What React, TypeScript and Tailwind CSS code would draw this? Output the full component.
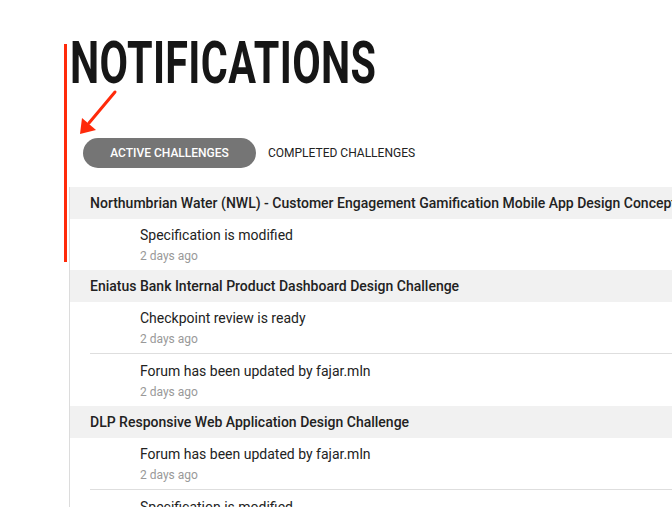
import React from "react";

type Notice = {
  text: string;
  time: string;
};

type Group = {
  title: string;
  items: Notice[];
};

const groups: Group[] = [
  {
    title:
      "Northumbrian Water (NWL) - Customer Engagement Gamification Mobile App Design Concept",
    items: [{ text: "Specification is modified", time: "2 days ago" }],
  },
  {
    title: "Eniatus Bank Internal Product Dashboard Design Challenge",
    items: [
      { text: "Checkpoint review is ready", time: "2 days ago" },
      { text: "Forum has been updated by fajar.mln", time: "2 days ago" },
    ],
  },
  {
    title: "DLP Responsive Web Application Design Challenge",
    items: [
      { text: "Forum has been updated by fajar.mln", time: "2 days ago" },
      { text: "Specification is modified", time: "2 days ago" },
    ],
  },
];

export default function App() {
  return (
    <div
      className="relative w-[672px] h-[507px] overflow-hidden bg-white text-[#222]"
      style={{ fontFamily: "Roboto, 'Noto Sans', sans-serif" }}
    >
      <div className="pt-[30px]">
        <h1 className="ml-[70px] h-[66px] origin-left scale-x-[0.7] whitespace-nowrap text-[59px] font-bold leading-[66px] tracking-[0.5px] text-[#161616]">
          NOTIFICATIONS
        </h1>

        <div className="mt-[42px] ml-[83px] flex items-center">
          <button className="h-[30px] w-[173px] rounded-full bg-[#757575] text-[12px] font-medium text-white">
            ACTIVE CHALLENGES
          </button>
          <button className="ml-[12px] text-[12px] text-[#222]">
            COMPLETED CHALLENGES
          </button>
        </div>

        <div className="mt-[19px] ml-[69px] border-l border-[#dcdcdc]">
          {groups.map((group) => (
            <div key={group.title}>
              <div className="flex h-[32px] items-center whitespace-nowrap bg-[#f1f1f1] px-5 text-[14px] font-medium">
                {group.title}
              </div>
              <div className="ml-5">
                {group.items.map((item, i) => (
                  <div
                    key={i}
                    className={
                      i > 0
                        ? "border-t border-[#dedede] pl-[50px] pt-[7px] pb-[6px]"
                        : "pl-[50px] pt-[6px] pb-[6px]"
                    }
                  >
                    <p className="text-[14px] leading-[20px]">{item.text}</p>
                    <p className="mt-[3px] text-[12px] leading-[16px] text-[#999]">
                      {item.time}
                    </p>
                  </div>
                ))}
              </div>
            </div>
          ))}
        </div>
      </div>

      {/* red annotation marks */}
      <div className="absolute left-[64px] top-[44px] h-[218px] w-[3px] bg-[#ff2a0a]" />
      <svg
        className="absolute left-0 top-0"
        width="140"
        height="150"
        viewBox="0 0 140 150"
      >
        <line
          x1="115"
          y1="92"
          x2="89"
          y2="123"
          stroke="#ff2a0a"
          strokeWidth="3"
          strokeLinecap="round"
        />
        <polygon points="80,134 82,118 96,130" fill="#ff2a0a" />
      </svg>
    </div>
  );
}
